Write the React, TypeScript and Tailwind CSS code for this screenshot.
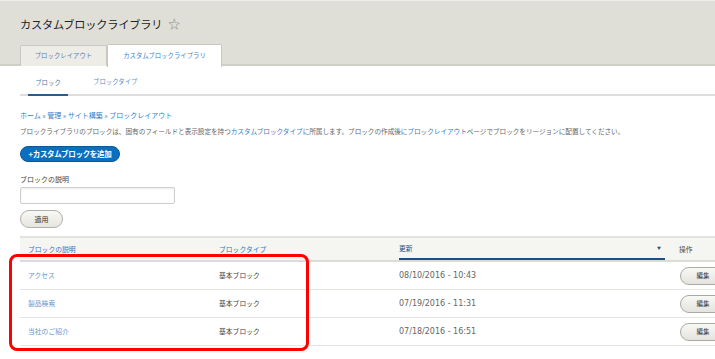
import { ReactNode } from 'react'

const jp = { fontFamily: '"Noto Sans CJK JP", "Noto Sans", sans-serif' }

const rows = [
  { name: 'アクセス', type: '基本ブロック', updated: '08/10/2016 - 10:43' },
  { name: '製品検索', type: '基本ブロック', updated: '07/19/2016 - 11:31' },
  { name: '当社のご紹介', type: '基本ブロック', updated: '07/18/2016 - 16:51' },
]

function Link({ children }: { children: ReactNode }) {
  return <span className="text-[#2f7fc8]">{children}</span>
}

export default function App() {
  return (
    <div className="relative w-[715px] h-[359px] overflow-hidden bg-white text-[#666]" style={jp}>
      {/* header */}
      <div className="h-[66px] bg-[#e0dfd7] border-t border-[#ecebe6] border-b-2 border-b-[#cfcfc6] flex flex-col">
        <div className="h-[44px] pl-[20px] pt-[13px] flex items-start gap-[6px]">
          <h1 className="text-[11.2px] leading-[20px] text-[#222] tracking-[-0.2px]">カスタムブロックライブラリ</h1>
          <span className="text-[12px] leading-[20px] text-[#888]">☆</span>
        </div>
        <div className="flex pl-[20px] h-[21px] -mb-[2px]">
          <div className="w-[87px] bg-[#edece6] border border-b-0 border-[#c9c8c0] rounded-t-[2px] flex items-center justify-center text-[6.4px] text-[#5a7fae]">
            ブロックレイアウト
          </div>
          <div className="w-[115px] bg-white border border-b-0 border-[#c9c8c0] rounded-t-[2px] flex items-center justify-center text-[6.4px] text-[#3a84c8] -mt-[1px] h-[23px]">
            カスタムブロックライブラリ
          </div>
        </div>
      </div>

      {/* secondary tabs */}
      <div className="ml-[20px] h-[30px] border-b-2 border-[#dedede] flex items-end">
        <div className="ml-[8px] w-[40px] h-[30px] border-b-2 border-[#2e5c8a] -mb-[2px] flex items-center justify-center pt-[6px] text-[6.4px] text-[#4a78a8]">
          ブロック
        </div>
        <div className="ml-[25px] h-[30px] flex items-center pt-[6px] text-[6.4px] text-[#5b8fcc]">ブロックタイプ</div>
      </div>

      <div className="pl-[20px]">
        <div className="pt-[14px] text-[7px] leading-[10px]">
          <Link>ホーム » 管理 » サイト構築 » ブロックレイアウト</Link>
        </div>
        <p className="pt-[6px] text-[6.65px] leading-[10px] whitespace-nowrap tracking-[-0.05px]">
          ブロックライブラリのブロックは、固有のフィールドと表示設定を持つ<Link>カスタムブロックタイプ</Link>に所属します。ブロックの作成後に<Link>ブロックレイアウト</Link>ページでブロックをリージョンに配置してください。
        </p>
        <div className="pt-[10px]">
          <div className="w-[100px] h-[16px] rounded-full bg-[#0b6fc0] border border-[#0a5896] flex items-center justify-center text-white font-bold text-[7.5px] tracking-[-0.3px]">
            +カスタムブロックを追加
          </div>
        </div>
        <div className="pt-[12px] text-[7px] leading-[10px] text-[#444]">ブロックの説明</div>
        <div className="mt-[3px] w-[155px] h-[17px] border border-[#cfcfcf] rounded-[2px] bg-white shadow-[inset_0_1px_2px_rgba(0,0,0,0.08)]" />
        <div className="mt-[6px] w-[43px] h-[18px] rounded-full border border-[#b0b0a8] bg-gradient-to-b from-[#f8f8f5] to-[#e6e5df] flex items-center justify-center text-[7px] text-[#333]">
          適用
        </div>

        {/* table */}
        <div className="mt-[8px] w-[760px]">
          <div className="grid grid-cols-[191px_180px_280px_109px] h-[26px] bg-[#f5f5f1] border-t-2 border-[#e4e3dd] border-b-2 border-b-[#dcdbd5] items-center text-[6.8px]">
            <div className="pl-[8px] text-[#2d78c2]">ブロックの説明</div>
            <div className="pl-[8px] text-[#2d78c2]">ブロックタイプ</div>
            <div className="pl-[8px] pr-[6px] h-full">
              <div className="h-full border-b-2 border-[#1f4f80] -mb-[2px] flex items-center justify-between pr-[4px] text-[#1f4f80]">
                <span>更新</span>
                <span className="text-[4px]">▼</span>
              </div>
            </div>
            <div className="pl-[8px] text-[#444]">操作</div>
          </div>
          {rows.map((r) => (
            <div key={r.name} className="grid grid-cols-[191px_180px_280px_109px] h-[28px] border-b border-[#e6e5e0] items-center">
              <div className="pl-[8px] text-[6.8px] text-[#6596cf]">{r.name}</div>
              <div className="pl-[8px] text-[6.8px] text-[#444]">{r.type}</div>
              <div className="pl-[8px] text-[8px] text-[#666]" style={{ fontFamily: '"DejaVu Sans", sans-serif' }}>{r.updated}</div>
              <div className="pl-[9px]">
                <div className="w-[46px] h-[18px] rounded-full border border-[#aaa9a2] bg-gradient-to-b from-[#f8f8f5] to-[#e4e3dd] flex items-center justify-center text-[6.4px] text-[#333]">
                  編集
                </div>
              </div>
            </div>
          ))}
        </div>
      </div>

      {/* highlight overlay */}
      <div className="absolute left-[9px] top-[254px] w-[300px] h-[97px] border-[3px] border-[#ff0000] rounded-[8px] pointer-events-none" />
    </div>
  )
}
